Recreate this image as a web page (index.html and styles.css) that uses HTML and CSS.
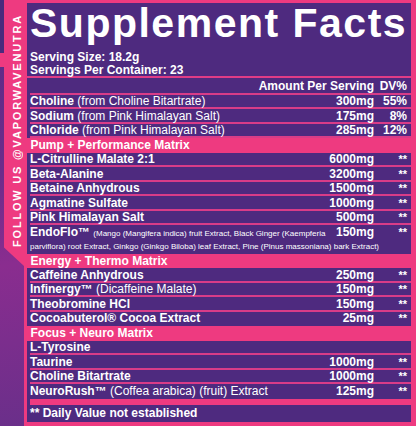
FILE: index.html
```html
<!DOCTYPE html>
<html lang="en">
<head>
<meta charset="utf-8">
<title>Supplement Facts</title>
<link rel="stylesheet" href="styles.css">
</head>
<body>
<div class="page">
  <aside class="side">
    <div class="strip"><span class="follow">FOLLOW US @VAPORWAVENUTRA</span></div>
  </aside>
  <main class="panel">
    <h1 class="title">Supplement Facts</h1>
    <div class="serving">
      <div>Serving Size: 18.2g</div>
      <div>Servings Per Container: 23</div>
    </div>
    <div class="row colhead"><span class="name"></span><span class="amt">Amount Per Serving</span><span class="dv">DV%</span></div>
    <div class="row"><span class="name"><b>Choline</b> (from Choline Bitartrate)</span><span class="amt">300mg</span><span class="dv">55%</span></div>
    <div class="row"><span class="name"><b>Sodium</b> (from Pink Himalayan Salt)</span><span class="amt">175mg</span><span class="dv">8%</span></div>
    <div class="row"><span class="name"><b>Chloride</b> (from Pink Himalayan Salt)</span><span class="amt">285mg</span><span class="dv">12%</span></div>

    <div class="section">Pump + Performance Matrix</div>
    <div class="row"><span class="name"><b>L-Citrulline Malate 2:1</b></span><span class="amt">6000mg</span><span class="dv na">**</span></div>
    <div class="row"><span class="name"><b>Beta-Alanine</b></span><span class="amt">3200mg</span><span class="dv na">**</span></div>
    <div class="row"><span class="name"><b>Betaine Anhydrous</b></span><span class="amt">1500mg</span><span class="dv na">**</span></div>
    <div class="row"><span class="name"><b>Agmatine Sulfate</b></span><span class="amt">1000mg</span><span class="dv na">**</span></div>
    <div class="row"><span class="name"><b>Pink Himalayan Salt</b></span><span class="amt">500mg</span><span class="dv na">**</span></div>
    <div class="row multi">
      <div class="line"><span class="name nowrap"><b>EndoFlo™</b> <small>(Mango (Mangifera indica) fruit Extract, Black Ginger (Kaempferia</small></span><span class="amt">150mg</span><span class="dv na">**</span></div>
      <div class="cont">parviflora) root Extract, Ginkgo (Ginkgo Biloba) leaf Extract, Pine (Pinus massoniana) bark Extract)</div>
    </div>

    <div class="section">Energy + Thermo Matrix</div>
    <div class="row"><span class="name"><b>Caffeine Anhydrous</b></span><span class="amt">250mg</span><span class="dv na">**</span></div>
    <div class="row"><span class="name"><b>Infinergy™</b> (Dicaffeine Malate)</span><span class="amt">150mg</span><span class="dv na">**</span></div>
    <div class="row"><span class="name"><b>Theobromine HCl</b></span><span class="amt">150mg</span><span class="dv na">**</span></div>
    <div class="row last"><span class="name"><b>Cocoabuterol® Cocoa Extract</b></span><span class="amt">25mg</span><span class="dv na">**</span></div>

    <div class="section">Focus + Neuro Matrix</div>
    <div class="row"><span class="name"><b>L-Tyrosine</b></span><span class="amt"></span><span class="dv"></span></div>
    <div class="row"><span class="name"><b>Taurine</b></span><span class="amt">1000mg</span><span class="dv na">**</span></div>
    <div class="row"><span class="name"><b>Choline Bitartrate</b></span><span class="amt">1000mg</span><span class="dv na">**</span></div>
    <div class="row last"><span class="name"><b>NeuroRush™</b> (Coffea arabica) (fruit) Extract</span><span class="amt">125mg</span><span class="dv na">**</span></div>

    <div class="bar"></div>
    <div class="footnote">** Daily Value not established</div>
  </main>
</div>
</body>
</html>
```

FILE: styles.css
```css
html, body {
  margin: 0;
  padding: 0;
  height: 100%;
}

body {
  background: #7b2d8e;
  font-family: "Liberation Sans", Arial, Helvetica, sans-serif;
  color: #ffffff;
  overflow: hidden;
}

.page {
  display: flex;
  width: 416px;
  height: 426px;
}

/* left decorative column */
.side {
  width: 24px;
  flex: none;
  background:
    linear-gradient(#4b2a7d, #4b2a7d) 0 0 / 4px 53px no-repeat,
    linear-gradient(#ee3a80, #ee3a80) 0 53px / 4px 14px no-repeat,
    linear-gradient(172deg, #5a2b86 0%, #6d2c8b 40%, #8a2d8f 62%, #7b2e8d 80%, #6a2f8a 100%);
}

.strip {
  margin-left: 4px;
  height: 266px;
  background: #ee3a80;
  clip-path: polygon(0 0, 100% 0, 100% 100%, 0 93%);
  padding-top: 14px;
  box-sizing: border-box;
  display: flex;
  align-items: flex-start;
}

.follow {
  writing-mode: vertical-rl;
  transform: rotate(180deg);
  font-size: 11px;
  line-height: 11px;
  font-weight: bold;
  letter-spacing: 1.8px;
  white-space: nowrap;
  margin-left: 7.5px;
  color: #ffffff;
}

/* main facts panel */
.panel {
  flex: 1;
  box-sizing: border-box;
  height: 426px;
  background: #4e2a7f;
  border-style: solid;
  border-color: #ee3a80;
  border-width: 3px 5px 4px 3px;
}

.title {
  margin: 0;
  padding-left: 3px;
  font-size: 41px;
  line-height: 40px;
  font-weight: bold;
  letter-spacing: 1.5px;
  white-space: nowrap;
}

.serving {
  margin-top: 8px;
  padding: 0 0 0 3px;
  font-size: 12px;
  line-height: 12.5px;
  font-weight: bold;
  border-bottom: 2px solid #e03c86;
}

.row {
  display: flex;
  margin-left: 3px;
  padding: 1.5px 4px 0 0;
  font-size: 12px;
  line-height: 11px;
  border-bottom: 2px solid #d93c88;
  white-space: nowrap;
}

.row.colhead {
  padding-top: 2.5px;
  padding-bottom: 1px;
  font-weight: bold;
}

.row.last {
  border-bottom-color: transparent;
}

.row.multi {
  display: block;
  padding-right: 0;
  border-bottom: none;
}

.line {
  display: flex;
  padding-right: 4px;
}

.cont {
  font-size: 8px;
  line-height: 15px;
  white-space: nowrap;
}

.name {
  flex: 1;
  min-width: 0;
}

.name b {
  font-weight: bold;
}

.name small {
  font-size: 8px;
}

.amt {
  flex: none;
  text-align: right;
  font-weight: bold;
}

.dv {
  flex: none;
  width: 33px;
  text-align: right;
  font-weight: bold;
}

.dv.na {
  font-size: 11px;
}

.section {
  background: #ee3a80;
  padding-left: 3.5px;
  font-size: 12px;
  line-height: 14.5px;
  font-weight: bold;
  color: #ffffff;
}

.bar {
  margin-left: 3px;
  height: 6px;
  background: #ee3a80;
}

.footnote {
  padding-left: 3px;
  font-size: 12px;
  line-height: 17.5px;
  font-weight: bold;
}
```
